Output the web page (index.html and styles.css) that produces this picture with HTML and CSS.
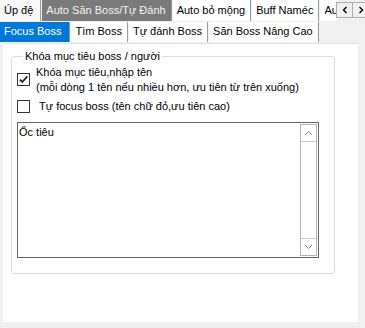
FILE: index.html
```html
<!DOCTYPE html>
<html lang="vi">
<head>
    <meta charset="UTF-8">
    <meta name="viewport" content="width=device-width, initial-scale=1.0">
    <title>Auto Săn Boss</title>
    <link rel="stylesheet" href="styles.css">
</head>
<body>

    <div class="window">
        <div class="tabs-top">
            <div class="tab">Úp đệ</div>
            <div class="tab active">Auto Săn Boss/Tự Đánh</div>
            <div class="tab">Auto bỏ mộng</div>
            <div class="tab">Buff Naméc</div>
            <div class="tab cut">Au</div>
            <div class="scroll-btns">
                <span class="sbtn">
                    <svg width="6" height="8" viewBox="0 0 6 8"><path d="M4.5 1 L1.5 4 L4.5 7" fill="none" stroke="#000" stroke-width="1.4"/></svg>
                </span>
                <span class="sbtn">
                    <svg width="6" height="8" viewBox="0 0 6 8"><path d="M1.5 1 L4.5 4 L1.5 7" fill="none" stroke="#000" stroke-width="1.4"/></svg>
                </span>
            </div>
        </div>

        <div class="tabs-sub">
            <div class="subtab active">Focus Boss</div>
            <div class="subtab">Tìm Boss</div>
            <div class="subtab">Tự đánh Boss</div>
            <div class="subtab">Săn Boss Nâng Cao</div>
        </div>

        <div class="page">
            <fieldset class="group">
                <legend>Khóa mục tiêu boss / người</legend>

                <label class="check">
                    <span class="box">
                        <svg width="11" height="11" viewBox="0 0 11 11"><path d="M1.8 5.6 L4.3 8 L9.3 2.4" fill="none" stroke="#222" stroke-width="1.8"/></svg>
                    </span>
                    <span class="label">Khóa mục tiêu,nhập tên<br>(mỗi dòng 1 tên nếu nhiều hơn, ưu tiên từ trên xuống)</span>
                </label>

                <label class="check second">
                    <span class="box"></span>
                    <span class="label">Tự focus boss (tên chữ đỏ,ưu tiên cao)</span>
                </label>

                <div class="textbox">
                    <div class="text">Ốc tiêu</div>
                    <div class="vscroll">
                        <span class="arrow">
                            <svg width="9" height="6" viewBox="0 0 9 6"><path d="M1 5 L4.5 1.5 L8 5" fill="none" stroke="#888" stroke-width="1"/></svg>
                        </span>
                        <span class="track"></span>
                        <span class="arrow">
                            <svg width="9" height="6" viewBox="0 0 9 6"><path d="M1 1 L4.5 4.5 L8 1" fill="none" stroke="#888" stroke-width="1"/></svg>
                        </span>
                    </div>
                </div>
            </fieldset>
        </div>
    </div>

</body>
</html>
```

FILE: styles.css
```css
body {
    margin: 0;
    background-color: #f0f0f0;
    font-family: "Liberation Sans", Arial, sans-serif;
    font-size: 11px;
    color: #000;
}

.window {
    width: 365px;
    height: 328px;
    display: flex;
    flex-direction: column;
}

.tabs-top {
    display: flex;
    height: 21px;
    overflow: hidden;
}

.tab {
    flex: none;
    padding: 0 5px 0 4px;
    line-height: 20px;
    white-space: nowrap;
    border-right: 1px solid #9a9a9a;
    margin-right: 1px;
    background-color: #fff;
}

.tab:first-child {
    background-color: #f7f7f7;
    padding-right: 7px;
}

.tab.active {
    background-color: #7a7a7a;
    color: #f4f4f4;
}

.tab.cut {
    width: 12px;
    overflow: hidden;
    border-right: none;
    padding-right: 0;
    margin-right: 0;
}

.scroll-btns {
    display: flex;
    flex: none;
    margin-top: 2px;
    margin-left: auto;
}

.sbtn {
    width: 17px;
    height: 16px;
    box-sizing: border-box;
    border: 1px solid #adadad;
    background-color: #f0f0f0;
    display: flex;
    align-items: center;
    justify-content: center;
}

.sbtn + .sbtn {
    border-left: none;
}

.tabs-sub {
    display: flex;
    height: 20px;
    padding-top: 1px;
}

.subtab {
    padding: 0 5px 0 4px;
    line-height: 19px;
    white-space: nowrap;
    border-right: 1px solid #9a9a9a;
    margin-right: 1px;
    background-color: #fff;
}

.subtab.active {
    background-color: #0078d7;
    color: #fff;
    padding-right: 8px;
}

.page {
    flex: 1;
    margin: 1px 7px 6px 3px;
    background-color: #fff;
    border-top: 1px solid #e3e3e3;
    padding: 6px 0 0 8px;
}

.group {
    width: 324px;
    height: 224px;
    box-sizing: border-box;
    margin: 0;
    padding: 0 0 0 5px;
    border: 1px solid #d5dfe5;
    border-radius: 3px;
}

.group legend {
    padding: 0 2px;
    margin-left: 6px;
}

.check {
    display: flex;
    align-items: flex-start;
    margin-top: 3px;
}

.box {
    width: 11px;
    height: 11px;
    border: 1px solid #333;
    background-color: #fff;
    margin-top: 8px;
    margin-right: 6px;
    flex: none;
    display: flex;
}

.label {
    line-height: 15px;
}

.check.second {
    margin-top: 4px;
}

.check.second .box {
    margin-top: 1px;
    margin-right: 9px;
}

.textbox {
    display: flex;
    width: 302px;
    height: 136px;
    box-sizing: border-box;
    border: 1px solid #646464;
    margin-top: 8px;
}

.text {
    flex: 1;
    padding: 3px 1px;
}

.vscroll {
    width: 17px;
    margin: 1px 1px 1px 0;
    display: flex;
    flex-direction: column;
    border: 1px solid #b4b4b4;
    box-sizing: border-box;
}

.arrow {
    height: 16px;
    display: flex;
    align-items: center;
    justify-content: center;
}

.arrow:first-child {
    border-bottom: 1px solid #c8c8c8;
}

.arrow:last-child {
    border-top: 1px solid #c8c8c8;
}

.track {
    flex: 1;
}
```
